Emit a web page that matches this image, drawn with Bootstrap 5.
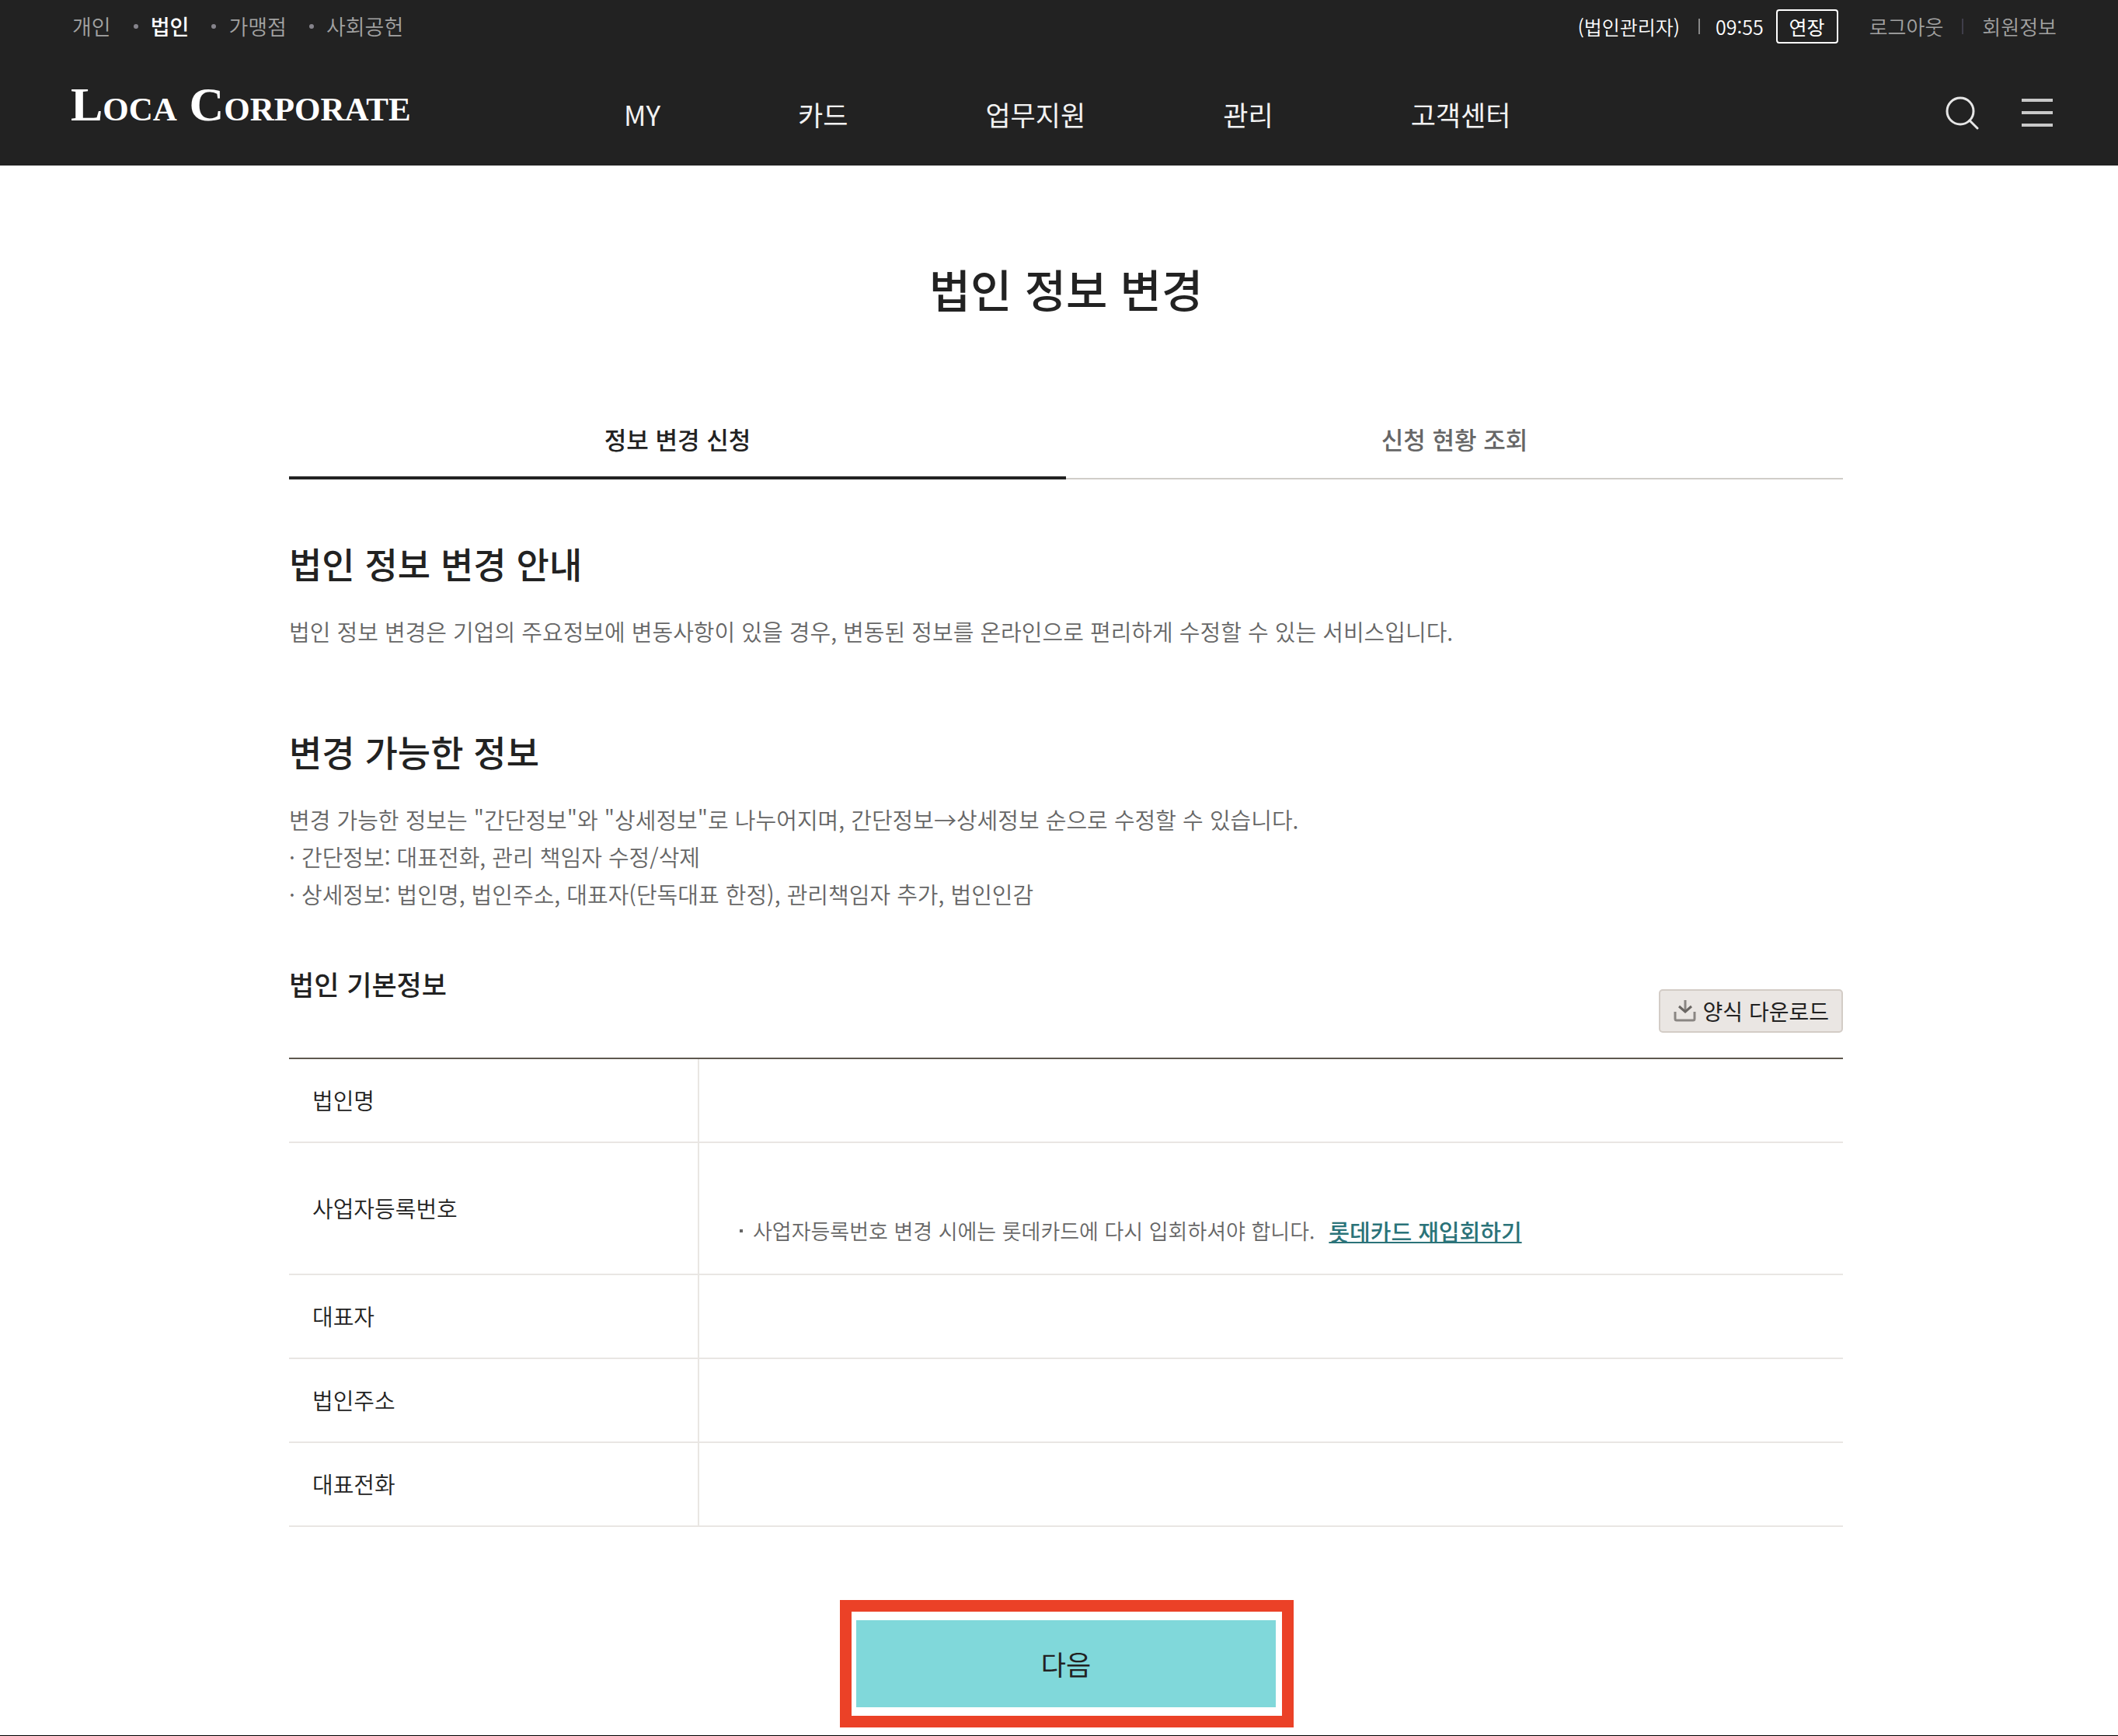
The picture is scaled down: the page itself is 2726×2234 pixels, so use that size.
<!DOCTYPE html>
<html lang="ko">
<head>
<meta charset="utf-8">
<meta name="viewport" content="width=device-width, initial-scale=1">
<title>법인 정보 변경 - LOCA CORPORATE</title>
<link rel="stylesheet" href="https://cdn.jsdelivr.net/npm/bootstrap@5.3.0/dist/css/bootstrap.min.css">
<style>
  body { font-family: "Noto Sans CJK KR", sans-serif; color: #222; background: #fff; font-weight: 350; }
  a { text-decoration: none; color: inherit; }
  .site-header { background: #222; height: 213px; padding: 0 79px 0 91px; }
  .util-bar { height: 68px; line-height: 36px; color: #a2a2a2; padding-left: 2px; }
  .family-nav { font-size: 27px; }
  .family-nav li + li { display: flex; align-items: center; }
  .family-nav li + li::before { content: ""; width: 6px; height: 6px; border-radius: 50%; background: #86848c; margin: 0 16px 0 29px; }
  .family-nav .current { color: #fff; font-weight: 500; }
  .member-nav { font-size: 25px; }
  .member-nav .who { color: #fff; }
  .member-nav a { font-size: 26px; }
  .v-sep { width: 2px; height: 20px; background: #888; margin: 0 20px 0 24px; }
  .v-sep.dim { background: #3f3e4a; margin: 0 24px; }
  .extend-btn { border: 2px solid #fff; border-radius: 4px; background: transparent; color: #fff; font-size: 25px; line-height: 36px; height: 44px; width: 80px; padding: 0; margin-right: 40px; }
  .brand-name { font-family: "Liberation Serif", serif; font-weight: 700; font-variant: small-caps; font-size: 62px; line-height: 60px; color: #fff; flex: 0 0 712px; margin-top: 36px; }
  .main-row { height: 136px; }
  .gnb { gap: 177px; font-size: 35px; line-height: 48px; font-weight: 400; color: #f2f2f2; margin-top: 55px; }
  .icon-btn { border: 0; background: transparent; padding: 0; display: flex; margin-top: 54px; }
  .page-wrap { padding-left: 18px; }
  .page-body { max-width: 2000px; margin: 0 auto; }
  .page-title { font-size: 58px; line-height: 80px; font-weight: 500; margin: 118px 0 0; padding-bottom: 110px; }
  .tab-link { height: 96px; font-size: 31px; line-height: 48px; padding-top: 20px; font-weight: 500; color: #666; border-bottom: 2px solid #d0cdc9; }
  .tab-link.selected { color: #222; border-bottom: 4px solid #222; }
  .guide-block { padding-top: 75px; }
  .guide-block + .guide-block { padding-top: 98px; }
  .block-title { font-size: 46px; line-height: 64px; font-weight: 500; margin: 0; }
  .block-text { font-size: 29px; line-height: 48px; color: #666; margin: 32px 0 0; }
  .table-block { padding-top: 68px; }
  .sub-title { font-size: 35px; line-height: 48px; font-weight: 500; margin: 0; }
  .download-btn { border: 2px solid #d3ccc6; border-radius: 5px; background: #eae6e3; color: #222; font-size: 28px; line-height: 40px; font-weight: 400; height: 56px; padding: 0 16px; margin-top: 31px; gap: 9px; }
  .info-table { width: 100%; table-layout: fixed; border-collapse: separate; border-spacing: 0; border-top: 2px solid #5e584f; margin: 32px 0 0; }
  .info-table th, .info-table td { border-bottom: 2px solid #e9e6e3; height: 108px; }
  .info-table th { width: 528px; padding: 0 30px; font-size: 29px; font-weight: 350; border-right: 2px solid #e9e6e3; }
  .info-table .tall { height: 170px; vertical-align: bottom; padding: 0 50px 31px; }
  .note { font-size: 27px; line-height: 48px; color: #666; }
  .note::before { content: ""; display: block; width: 4px; height: 4px; background: #666; margin: 0 13px 0 2px; }
  .note a { font-size: 29px; font-weight: 500; color: #2b7379; text-decoration: underline; text-decoration-thickness: 2px; margin-left: 18px; }
  .focus-frame { border: 15px solid #eb4127; padding: 11px 8px 11px 6px; margin: 94px 0 0 2px; }
  .next-btn { width: 540px; height: 112px; border: 0; background: #80d8da; color: #222; font-size: 35px; font-weight: 400; }
  .page-end { border-top: 1px solid #000; margin-top: 10px; }
</style>
<script src="https://cdn.jsdelivr.net/npm/bootstrap@5.3.0/dist/js/bootstrap.bundle.min.js"></script>
</head>
<body>
<header class="site-header">
  <div class="util-bar d-flex justify-content-between align-items-center">
    <ul class="family-nav list-unstyled d-flex m-0">
      <li><a href="#">개인</a></li>
      <li><a href="#" class="current">법인</a></li>
      <li><a href="#">가맹점</a></li>
      <li><a href="#">사회공헌</a></li>
    </ul>
    <div class="member-nav d-flex align-items-center">
      <span class="who">(법인관리자)</span>
      <span class="v-sep"></span>
      <span class="who me-3">09:55</span>
      <button type="button" class="extend-btn">연장</button>
      <a href="#">로그아웃</a>
      <span class="v-sep dim"></span>
      <a href="#">회원정보</a>
    </div>
  </div>
  <div class="main-row d-flex align-items-start">
    <a href="#" class="brand-name">Loca Corporate</a>
    <nav class="gnb d-flex me-auto" aria-label="주 메뉴">
      <a href="#">MY</a><a href="#">카드</a><a href="#">업무지원</a><a href="#">관리</a><a href="#">고객센터</a>
    </nav>
    <button type="button" class="icon-btn me-5" aria-label="검색">
      <svg width="48" height="48" viewBox="0 0 48 48" fill="none" stroke="#e6e6e6" stroke-width="3" stroke-linecap="round"><circle cx="20" cy="21" r="17"/><path d="M32 33l10 10"/></svg>
    </button>
    <button type="button" class="icon-btn" aria-label="전체 메뉴">
      <svg width="48" height="48" viewBox="0 0 48 48" stroke="#c8c8c8" stroke-width="4"><path d="M3 7h40M3 23h40M3 39h40"/></svg>
    </button>
  </div>
</header>

<main class="page-wrap">
  <div class="page-body">
    <h1 class="page-title text-center">법인 정보 변경</h1>
    <nav class="d-flex text-center" aria-label="탭">
      <a href="#" class="tab-link selected flex-fill w-50" aria-current="page">정보 변경 신청</a>
      <a href="#" class="tab-link flex-fill w-50">신청 현황 조회</a>
    </nav>
    <section class="guide-block">
      <h2 class="block-title">법인 정보 변경 안내</h2>
      <p class="block-text">법인 정보 변경은 기업의 주요정보에 변동사항이 있을 경우, 변동된 정보를 온라인으로 편리하게 수정할 수 있는 서비스입니다.</p>
    </section>
    <section class="guide-block">
      <h2 class="block-title">변경 가능한 정보</h2>
      <p class="block-text">변경 가능한 정보는 "간단정보"와 "상세정보"로 나누어지며, 간단정보→상세정보 순으로 수정할 수 있습니다.<br>· 간단정보: 대표전화, 관리 책임자 수정/삭제<br>· 상세정보: 법인명, 법인주소, 대표자(단독대표 한정), 관리책임자 추가, 법인인감</p>
    </section>
    <section class="table-block">
      <div class="d-flex justify-content-between align-items-end">
        <h3 class="sub-title align-self-start">법인 기본정보</h3>
        <button type="button" class="download-btn d-flex align-items-center">
          <svg width="30" height="30" viewBox="0 0 30 30" fill="none" stroke="#8a8683" stroke-width="3"><path d="M3 16v9q0 2 2 2h21q2 0 2-2v-9"/><path d="M16 1v15"/><path d="M8 9l8 7 8-7" stroke="#6a6663"/></svg>
          양식 다운로드
        </button>
      </div>
      <table class="info-table">
        <tbody>
          <tr><th scope="row">법인명</th><td></td></tr>
          <tr><th scope="row">사업자등록번호</th><td class="tall"><div class="note d-flex align-items-center">사업자등록번호 변경 시에는 롯데카드에 다시 입회하셔야 합니다.<a href="#">롯데카드 재입회하기</a></div></td></tr>
          <tr><th scope="row">대표자</th><td></td></tr>
          <tr><th scope="row">법인주소</th><td></td></tr>
          <tr><th scope="row">대표전화</th><td></td></tr>
        </tbody>
      </table>
    </section>
    <div class="d-flex justify-content-center">
      <div class="focus-frame"><button type="button" class="next-btn d-block">다음</button></div>
    </div>
  </div>
</main>
<div class="page-end"></div>
</body>
</html>
